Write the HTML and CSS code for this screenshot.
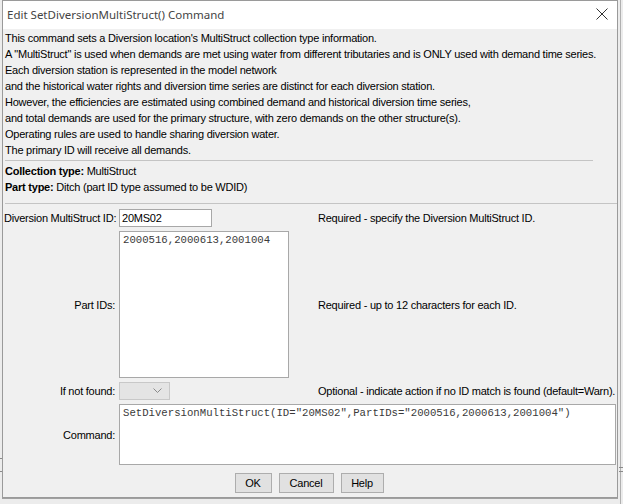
FILE: index.html
```html
<!DOCTYPE html>
<html>
<head>
<meta charset="utf-8">
<title>Edit SetDiversionMultiStruct() Command</title>
<link rel="stylesheet" href="styles.css">
</head>
<body>
<div class="dialog">
  <div class="titlebar">
    <span class="title">Edit SetDiversionMultiStruct() Command</span>
    <svg class="close" width="12" height="12" viewBox="0 0 12 12"><path d="M0.5 0.5 L11.5 11.5 M11.5 0.5 L0.5 11.5" stroke="#333" stroke-width="1" fill="none"/></svg>
  </div>
  <div class="content">
    <div class="notes">
      <div class="line">This command sets a Diversion location's MultiStruct collection type information.</div>
      <div class="line">A "MultiStruct" is used when demands are met using water from different tributaries and is ONLY used with demand time series.</div>
      <div class="line">Each diversion station is represented in the model network</div>
      <div class="line">and the historical water rights and diversion time series are distinct for each diversion station.</div>
      <div class="line">However, the efficiencies are estimated using combined demand and historical diversion time series,</div>
      <div class="line">and total demands are used for the primary structure, with zero demands on the other structure(s).</div>
      <div class="line">Operating rules are used to handle sharing diversion water.</div>
      <div class="line">The primary ID will receive all demands.</div>
    </div>
    <div class="sep sep-short"></div>
    <div class="info">
      <div class="line"><b>Collection type:</b> MultiStruct</div>
      <div class="line"><b>Part type:</b> Ditch (part ID type assumed to be WDID)</div>
    </div>
    <div class="sep sep-long"></div>
    <div class="form">
      <label class="lbl">Diversion MultiStruct ID:</label>
      <div class="field"><div class="textfield">20MS02</div></div>
      <div class="desc">Required - specify the Diversion MultiStruct ID.</div>

      <label class="lbl">Part IDs:</label>
      <div class="field"><div class="textarea parts mono">2000516,2000613,2001004</div></div>
      <div class="desc">Required - up to 12 characters for each ID.</div>

      <label class="lbl">If not found:</label>
      <div class="field"><div class="select"><svg width="9" height="6" viewBox="0 0 9 6"><path d="M0.5 0.5 L4.5 4.5 L8.5 0.5" stroke="#8a8a8a" fill="none" stroke-width="1"/></svg></div></div>
      <div class="desc">Optional - indicate action if no ID match is found (default=Warn).</div>

      <label class="lbl">Command:</label>
      <div class="field wide"><div class="textarea command mono">SetDiversionMultiStruct(ID="20MS02",PartIDs="2000516,2000613,2001004")</div></div>
    </div>
    <div class="buttons">
      <button class="btn btn-ok">OK</button>
      <button class="btn btn-cancel">Cancel</button>
      <button class="btn btn-help">Help</button>
    </div>
  </div>
</div>
</body>
</html>
```

FILE: styles.css
```css
html, body {
  margin: 0;
  padding: 0;
}
body {
  width: 623px;
  height: 504px;
  overflow: hidden;
  background:
    linear-gradient(#8a8a8a, #8a8a8a) 0 458px / 3px 1px no-repeat,
    linear-gradient(#8a8a8a, #8a8a8a) 0 471px / 3px 1px no-repeat,
    linear-gradient(#8a8a8a, #8a8a8a) 619px 467px / 4px 1px no-repeat,
    linear-gradient(#8a8a8a, #8a8a8a) 619px 471px / 4px 1px no-repeat,
    linear-gradient(#b0b0b0, #b0b0b0) 620px 0 / 1px 504px no-repeat,
    #ececec;
  font-family: "Liberation Sans", Arial, sans-serif;
  font-size: 11px;
  letter-spacing: -0.23px;
  color: #000;
}
.dialog {
  margin-left: 2px;
  width: 614px;
  height: 496px;
  border: 1px solid #9a9a9a;
  background: #f0f0f0;
  box-shadow: 0 1px 0 #a0a0a0;
}
.titlebar {
  height: 28px;
  background: #fff;
  display: flex;
  align-items: center;
  justify-content: space-between;
  padding: 0 9px 0 4px;
}
.title {
  font-family: "Noto Sans", sans-serif;
  font-size: 11.5px;
  letter-spacing: 0;
  color: #444;
  margin-top: -2px;
}
.close {
  display: block;
  margin-top: -2px;
}
.content {
  padding: 1px 0 0 2px;
}
.line {
  height: 16px;
  line-height: 16px;
  white-space: nowrap;
}
.sep {
  height: 1px;
  background: #c4c4c4;
}
.sep-short {
  width: 588px;
  margin: 2px 0 2px 0;
}
.sep-long {
  width: 612px;
  margin: 8px 0 5px 0;
}
.form {
  display: grid;
  grid-template-columns: 111px 197px auto;
  grid-template-rows: 18px 147px 18px 61px;
  column-gap: 3px;
  row-gap: 4px;
  margin-left: -1px;
}
.lbl {
  text-align: right;
  align-self: center;
  white-space: nowrap;
}
.desc {
  align-self: center;
  white-space: nowrap;
}
.field {
  display: flex;
  align-items: flex-start;
  margin-left: 1px;
}
.field.wide {
  grid-column: 2 / 4;
}
.textfield {
  box-sizing: border-box;
  width: 93px;
  height: 18px;
  border: 1px solid #a8a8a8;
  background: #fff;
  line-height: 16px;
  padding-left: 2px;
}
.textarea {
  box-sizing: border-box;
  border: 1px solid #a8a8a8;
  background: #fff;
  padding: 2px 3px;
}
.parts {
  width: 170px;
  height: 147px;
}
.command {
  width: 497px;
  height: 61px;
}
.mono {
  font-family: "Liberation Mono", "Courier New", monospace;
  font-size: 10.67px;
  letter-spacing: 0;
  color: #3a3a3a;
  line-height: 13px;
  white-space: nowrap;
}
.select {
  box-sizing: border-box;
  width: 51px;
  height: 18px;
  border: 1px solid #c8c8c8;
  background: #e4e4e4;
  display: flex;
  align-items: center;
  justify-content: flex-end;
  padding-right: 7px;
}
.select svg {
  display: block;
}
.buttons {
  display: flex;
  justify-content: center;
  gap: 7px;
  margin-top: 8px;
  padding-right: 4px;
}
.btn {
  box-sizing: border-box;
  height: 20px;
  border: 1px solid #adadad;
  background: #e1e1e1;
  font-family: "Liberation Sans", Arial, sans-serif;
  font-size: 11px;
  letter-spacing: -0.23px;
  color: #000;
  padding: 0;
  margin: 0;
}
.btn-ok { width: 37px; }
.btn-cancel { width: 55px; }
.btn-help { width: 43px; }
```
